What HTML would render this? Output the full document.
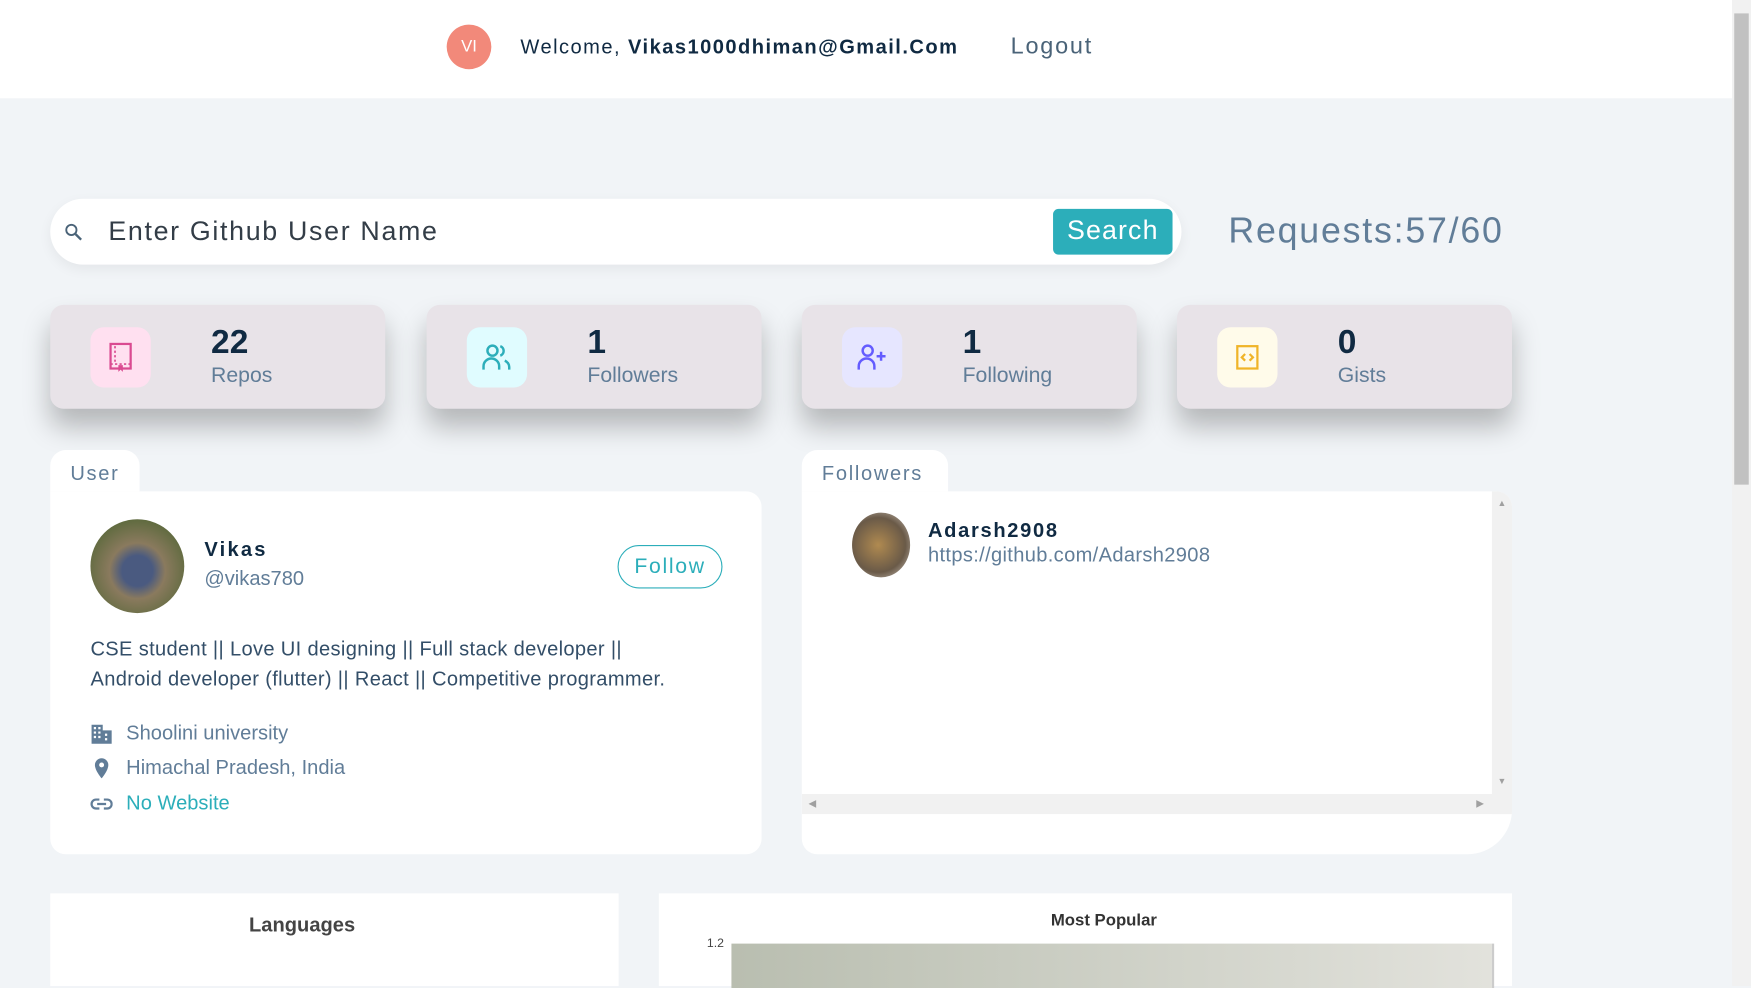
<!DOCTYPE html>
<html><head><meta charset="utf-8"><style>
html,body{margin:0;padding:0;width:1751px;height:986px;overflow:hidden;background:#f1f4f7;font-family:"Liberation Sans",sans-serif}
#w{position:absolute;left:0;top:0;width:1568px;height:883px;transform:scale(1.1167);transform-origin:0 0;background:#f1f4f7}
.a{position:absolute}
.hdr{left:0;top:0;width:1551px;height:88px;background:#fff}
.card{background:#e8e3e8;border-radius:12px;height:93px;width:300px;top:273px;box-shadow:0 16px 24px rgba(0,0,0,.25)}
.ib{position:absolute;left:36px;top:20px;width:54px;height:54px;border-radius:12px;display:flex;align-items:center;justify-content:center}
.num{position:absolute;left:144px;top:17px;font-size:30px;font-weight:bold;color:#102a42}
.lbl{position:absolute;left:144px;top:53px;font-size:19px;color:#617d98}
.tab{background:#fff;border-radius:14px 14px 0 0;font-size:18px;color:#617d98;letter-spacing:1.5px;padding:11px 18px 0}
.row{position:absolute;left:36px;font-size:18px;color:#617d98;display:flex;align-items:center;gap:12px}
</style></head><body><div id="w">
<div class="a hdr"></div>
<div class="a" style="left:400px;top:22px;width:40px;height:40px;border-radius:50%;background:#f2897a;color:#fff;font-size:15px;text-align:center;line-height:40px">VI</div>
<div class="a" style="left:466px;top:32px;font-size:18px;letter-spacing:1.3px;color:#102a42">Welcome, <b>Vikas1000dhiman@Gmail.Com</b></div>
<div class="a" style="left:905px;top:30px;font-size:21px;letter-spacing:1.6px;color:#4a6378">Logout</div>
<div class="a" style="left:1551px;top:0;width:17px;height:883px;background:#f1f1f1"></div>
<div class="a" style="left:1553px;top:12px;width:13px;height:422px;background:#c1c1c1"></div>

<div class="a" style="left:45px;top:178px;width:1013px;height:59px;background:#fff;border-radius:30px;box-shadow:0 4px 12px rgba(0,0,0,.06)"></div>
<svg class="a" style="left:56px;top:198px" width="20" height="20" viewBox="0 0 24 24"><circle cx="9.5" cy="9.5" r="5.5" fill="none" stroke="#4a6378" stroke-width="2"/><path d="M14 14l6 6" stroke="#4a6378" stroke-width="2.5"/></svg>
<div class="a" style="left:97px;top:194px;font-size:24px;letter-spacing:1.5px;color:#333d47">Enter Github User Name</div>
<div class="a" style="left:943px;top:187px;width:107px;height:41px;background:#2caeba;border-radius:5px;color:#fff;font-size:24px;letter-spacing:1px;text-align:center;line-height:40px">Search</div>
<div class="a" style="left:1100px;top:188px;font-size:32px;letter-spacing:1.6px;color:#617d98">Requests:57/60</div>

<div class="a card" style="left:45px"><div class="ib" style="background:#ffe0f0"><svg width="24" height="28" viewBox="0 0 24 28"><rect x="3" y="2" width="18" height="22" fill="none" stroke="#da4a91" stroke-width="2"/><path d="M3 20h18M7 4v14" stroke="#da4a91" stroke-width="1.5" stroke-dasharray="2 2"/><path d="M10 21v6l2-2 2 2v-6z" fill="#da4a91"/></svg></div><div class="num">22</div><div class="lbl">Repos</div></div>
<div class="a card" style="left:382px"><div class="ib" style="background:#e0fcff"><svg width="30" height="30" viewBox="0 0 30 30" fill="none" stroke="#2caeba" stroke-width="2.2"><circle cx="11" cy="9" r="4.5"/><path d="M3 26v-3a7 7 0 0 1 14 0v3M18 5a4.5 4.5 0 0 1 0 8.5M22 18a6 6 0 0 1 4 6v2"/></svg></div><div class="num">1</div><div class="lbl">Followers</div></div>
<div class="a card" style="left:718px"><div class="ib" style="background:#e6e6ff"><svg width="30" height="30" viewBox="0 0 30 30" fill="none" stroke="#645cff" stroke-width="2.2"><circle cx="11" cy="9" r="4.5"/><path d="M3 26v-3a7 7 0 0 1 14 0v3M23 10v8M19 14h8"/></svg></div><div class="num">1</div><div class="lbl">Following</div></div>
<div class="a card" style="left:1054px"><div class="ib" style="background:#fffbea"><svg width="22" height="24" viewBox="0 0 22 24" fill="none" stroke="#f0b429" stroke-width="2"><rect x="2" y="2" width="18" height="20"/><path d="M9 9l-3 3 3 3M13 9l3 3-3 3"/></svg></div><div class="num">0</div><div class="lbl">Gists</div></div>

<div class="a tab" style="left:45px;top:403px;width:44px;height:26px">User</div>
<div class="a" style="left:45px;top:440px;width:637px;height:325px;background:#fff;border-radius:0 14px 14px 14px">
 <div class="a" style="left:36px;top:25px;width:84px;height:84px;border-radius:50%;background:radial-gradient(circle at 50% 55%,#4a5a80 0 22%,#8a7a5e 40%,#5e6a3e 75%)"></div>
 <div class="a" style="left:138px;top:42px;font-size:18px;font-weight:bold;letter-spacing:2px;color:#102a42">Vikas</div>
 <div class="a" style="left:138px;top:68px;font-size:18px;color:#617d98">@vikas780</div>
 <div class="a" style="left:508px;top:48px;width:92px;height:37px;border:1px solid #2caeba;border-radius:20px;color:#2caeba;font-size:19px;letter-spacing:1.5px;text-align:center;line-height:37px">Follow</div>
 <div class="a" style="left:36px;top:128px;font-size:18px;line-height:27px;color:#334e68;width:580px;letter-spacing:0.3px">CSE student || Love UI designing || Full stack developer ||<br>Android developer (flutter) || React || Competitive programmer.</div>
 <div class="row" style="top:206px"><svg width="20" height="20" viewBox="0 0 20 20" fill="#617d98"><path d="M1 2h10v17H1zM11 7h8v12h-8z"/><path d="M3 4h2v2H3zM7 4h2v2H7zM3 8h2v2H3zM7 8h2v2H7zM3 12h2v2H3zM7 12h2v2H7zM13 10h2v2h-2zM13 14h2v2h-2z" fill="#fff"/></svg>Shoolini university</div>
 <div class="row" style="top:237px"><svg width="20" height="20" viewBox="0 0 20 20"><path d="M10 1a6 6 0 0 0-6 6c0 5 6 12 6 12s6-7 6-12a6 6 0 0 0-6-6z" fill="#617d98"/><circle cx="10" cy="7" r="2.2" fill="#fff"/></svg>Himachal Pradesh, India</div>
 <div class="row" style="top:269px;color:#2caeba"><svg width="20" height="20" viewBox="0 0 20 20" fill="none" stroke="#617d98" stroke-width="2"><path d="M8 6H5a4 4 0 0 0 0 8h3M12 6h3a4 4 0 0 1 0 8h-3M6 10h8"/></svg>No Website</div>
</div>

<div class="a tab" style="left:718px;top:403px;width:95px;height:26px">Followers</div>
<div class="a" style="left:718px;top:440px;width:636px;height:325px;background:#fff;border-radius:0 14px 40px 14px;overflow:hidden">
 <div class="a" style="left:45px;top:19px;width:52px;height:58px;border-radius:50%;background:radial-gradient(circle at 45% 50%,#b08a50,#6a5a48 60%,#d8d0c8)"></div>
 <div class="a" style="left:113px;top:25px;font-size:18px;font-weight:bold;letter-spacing:1.5px;color:#102a42">Adarsh2908</div>
 <div class="a" style="left:113px;top:47px;font-size:18px;color:#617d98;letter-spacing:0.3px">https://github.com/Adarsh2908</div>
 <div class="a" style="left:618px;top:0;width:18px;height:289px;background:#f1f1f1"></div>
 <div class="a" style="left:623px;top:6px;font-size:8px;color:#a0a0a0">▲</div>
 <div class="a" style="left:623px;top:255px;font-size:8px;color:#a0a0a0">▼</div>
 <div class="a" style="left:0;top:271px;width:636px;height:18px;background:#f1f1f1"></div>
 <div class="a" style="left:6px;top:274px;font-size:9px;color:#a0a0a0">◀</div>
 <div class="a" style="left:604px;top:274px;font-size:9px;color:#a0a0a0">▶</div>
</div>

<div class="a" style="left:45px;top:800px;width:509px;height:83px;background:#fff"><div class="a" style="left:178px;top:18px;font-size:18px;font-weight:bold;color:#444">Languages</div></div>
<div class="a" style="left:590px;top:800px;width:764px;height:83px;background:#fff">
 <div class="a" style="left:351px;top:16px;font-size:15px;font-weight:bold;color:#333">Most Popular</div>
 <div class="a" style="left:43px;top:39px;font-size:11px;color:#444">1.2</div>
 <div class="a" style="left:65px;top:45px;width:681px;height:40px;background:linear-gradient(90deg,#b9beb0,#e2e2dc);border-right:2px solid #ccc"></div>
</div>
</div></body></html>
